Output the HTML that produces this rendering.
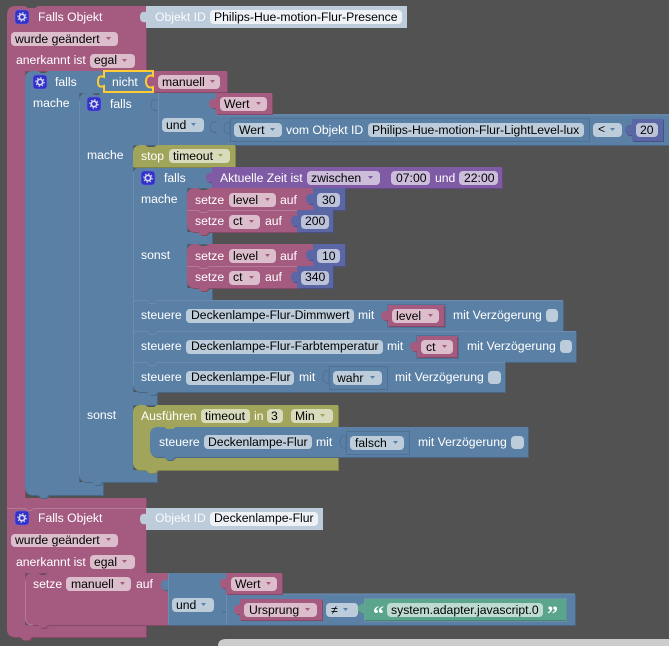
<!DOCTYPE html>
<html><head><meta charset="utf-8"><style>
html,body{margin:0;padding:0;background:#525252;width:669px;height:646px;overflow:hidden}
svg{display:block;position:absolute;left:0;top:0}
text{font-family:"Liberation Sans",sans-serif;font-size:12.2px;fill:#fff;white-space:pre}
.d{fill:#000}
.p{fill:#A55B80;filter:drop-shadow(1px 1px 0 #844966)}
.b{fill:#5B80A5;filter:drop-shadow(1px 1px 0 #496684)}
.o{fill:#A1A55B;filter:drop-shadow(1px 1px 0 #818449)}
.u{fill:#805BA5;filter:drop-shadow(1px 1px 0 #664984)}
.i{fill:#5B67A5;filter:drop-shadow(1px 1px 0 #495284)}
.g{fill:#5BA58C;filter:drop-shadow(1px 1px 0 #498470)}
.f{fill:#fff;fill-opacity:.6}
.c{fill:#BDCCDB}
.ab{fill:#5B80A5}
.l{fill:none;stroke:#6C8DAE;stroke-width:1}
.lp{fill:none;stroke:#B57A97;stroke-width:1}
.dk{fill:none;stroke:#4F7196;stroke-width:1}
.gi{fill:#3232C8;stroke:#6A6AD8;stroke-width:.6}
.gc{fill:none;stroke:#D8D8F4;stroke-width:1.700}
.gt{fill:none;stroke:#D8D8F4;stroke-width:1.100;stroke-dasharray:1.500 1.800}
</style></head><body>
<svg width="669" height="646" viewBox="0 0 669 646" xmlns="http://www.w3.org/2000/svg">
<!-- block 1 pink -->
<path class="p" d="M7 15Q7 6 16 6L25 6L28 8L35 8L38 6L146 6L146 71L25 71L25 498L146 498L146 508L7 508Z"/>
<!-- objekt id -->
<path class="c" d="M146 6H407V28H146V22C142 23 140 21 140 17C140 13 142 11 146 12Z"/>
<!-- outer if -->
<path class="b" d="M25 79Q25 71 33 71L38 71L41 73L45 73L48 71L103 71L103 93L79 93L79 482L103 482L103 495L49 495L46 498L41 498L38 495L33 495Q25 495 25 487Z"/>
<!-- level 2 if -->
<path class="b" d="M79 101Q79 93 87 93L92 93L95 95L98 95L101 93L157 93L157 145L133 145L133 392L157 392L157 405L133 405L133 470L157 470L157 482L103 482L100 485L95 485L92 482L87 482Q79 482 79 474Z"/>
<path class="l" d="M79.500 101V474"/>
<!-- und region -->
<path class="b" d="M157 93H216V145H157V110C153 111 151 109 151 105C151 101 153 99 157 100Z"/>
<path class="l" d="M158.500 93V145M216.500 114V145"/>
<path class="dk" d="M157 100C153 99 151 101 151 105C151 109 153 111 157 110"/>
<!-- compare -->
<path class="b" d="M216 114H669V145H216V132C212 133 210 131 210 127C210 123 212 121 216 122Z"/>
<path class="l" d="M216 115H669"/>
<path class="dk" d="M216 122C212 121 210 123 210 127C210 131 212 133 216 132"/>
<rect x="230.500" y="118.500" width="359" height="23" fill="#5B80A5" stroke="#4F7196"/>
<path class="ab" d="M230 123C226 122 224 124 224 128C224 132 226 134 230 133Z" stroke="#4F7196"/>
<!-- Wert 1 -->
<path class="p" d="M216 93H272V114H216V108C212 109 209 107 209 103.500C209 100 212 98 216 99Z"/>
<!-- nicht -->
<path class="ab" d="M104 72H153V92H104V86C99 88 97 85 97 82C97 78 99 75 104 77Z"/>
<path class="p" d="M153 71H227V92H153V87C149 88 147 85 147 81.500C147 78 149 75 153 76Z"/>
<path d="M104 71H153V76C148 74 146 78 146 81.500C146 85 148 89 153 87V92H104V86C99 88 98 85 98 82C98 78 99 75 104 77Z" fill="none" stroke="#FC3" stroke-width="2"/>
<!-- level3 if -->
<path class="b" d="M133 175Q133 167 141 167L212 167L212 188L187 188L187 232L212 232L212 244L187 244L187 288L212 288L212 300L133 300Z"/>
<path class="l" d="M133.500 172V299"/>
<!-- stop -->
<path class="o" d="M133 153Q133 145 141 145L145 145L148 147L154 147L157 145L235 145V167H133Z"/>
<!-- purple -->
<path class="u" d="M212 167H502V188H212V182C208 183 206 181 206 177.500C206 174 208 172 212 173Z"/>
<!-- setze level 1 -->
<path class="p" d="M187 196Q187 188 195 188L198 188L201 190L206 190L209 188L313 188V210H187Z"/>
<path class="i" d="M313 188H345V210H313V204C309 205 306 203 306 199C306 195 309 193 313 194Z"/>
<path class="p" d="M187 210H297V232H209L206 235H201L198 232H195Q187 232 187 224Z"/>
<path class="lp" d="M187 210.500H198L201 212.500H206L209 210.500H297"/>
<path class="i" d="M297 210H333V232H297V226C293 227 291 225 291 221C291 217 293 215 297 216Z"/>
<!-- setze level 2 -->
<path class="p" d="M187 252Q187 244 195 244L198 244L201 246L206 246L209 244L313 244V266H187Z"/>
<path class="i" d="M313 244H345V266H313V260C309 261 306 259 306 255C306 251 309 249 313 250Z"/>
<path class="p" d="M187 266H297V288H209L206 291H201L198 288H195Q187 288 187 280Z"/>
<path class="lp" d="M187 266.500H198L201 268.500H206L209 266.500H297"/>
<path class="i" d="M297 266H333V288H297V282C293 283 291 281 291 277C291 273 293 271 297 272Z"/>
<!-- steuere blocks -->
<path class="b" d="M133 300H563V331H133Z"/>
<path class="l" d="M133 300.500H147L150 303.500H155L158 300.500H563"/>
<path class="b" d="M133 331H576V362H133Z"/>
<path class="l" d="M133 331.500H147L150 334.500H155L158 331.500H576"/>
<path class="b" d="M133 362H505V392H158L155 395H150L147 392H141Q133 392 133 384Z"/>
<path class="l" d="M133 362.500H147L150 365.500H155L158 362.500H505"/>
<path class="l" d="M133.500 300V385"/>
<!-- level value -->
<rect x="387.500" y="304.500" width="58" height="23" fill="none" stroke="#4F7196"/>
<path class="p" d="M388 305H444V326H388V320C384 321 381 319 381 315.500C381 312 384 310 388 311Z"/>
<rect x="416.500" y="335.500" width="42" height="23" fill="none" stroke="#4F7196"/>
<path class="p" d="M417 336H457V357H417V351C413 352 410 350 410 346.500C410 343 413 341 417 342Z"/>
<rect x="329.500" y="366.500" width="58" height="23" fill="none" stroke="#4F7196"/>
<path class="ab" d="M329 371C325 370 323 372 323 377C323 382 325 384 329 383Z" stroke="#4F7196"/>
<!-- olive ausfuehren -->
<path class="o" d="M133 413Q133 405 141 405L145 405L148 407L154 407L157 405L338 405V427H176L173 429H167L164 427H158Q150 427 150 435V449Q150 457 158 457H338V470H158L155 473H149L146 470H141Q133 470 133 462Z"/>
<!-- inner steuere -->
<path class="b" d="M150 435Q150 427 158 427H164L167 429H173L176 427H528V457H175L172 460H167L164 457H158Q150 457 150 449Z"/>
<rect x="346.500" y="431.500" width="63" height="23" fill="none" stroke="#4F7196"/>
<path class="ab" d="M346 436C342 435 340 437 340 442C340 447 342 449 346 448Z" stroke="#4F7196"/>
<!-- block 2 pink -->
<path class="p" d="M7 508H146V573H25V625H146V637H32L29 640H23L20 637H15Q7 637 7 629Z"/>
<path class="lp" d="M7 508.500H25L28 510.500H31L34 508.500H146"/>
<path class="c" d="M146 508H323V530H146V524C142 525 140 523 140 519C140 515 142 513 146 514Z"/>
<!-- setze manuell -->
<path class="p" d="M25 581Q25 573 33 573L38 573L41 575L45 575L48 573L168 573V625H48L45 628H41L38 625H33Q25 625 25 617Z"/>
<path class="lp" d="M25.500 581V618Q25.500 625 33 625"/>
<path class="b" d="M168 573H226V625H168V590C164 591 161 589 161 585C161 581 164 579 168 580Z"/>
<path class="b" d="M226 594H575V625H226V611C222 612 220 610 220 606C220 602 222 600 226 601Z"/>
<path class="l" d="M226.500 594H575M168.500 574V625M226.500 594V625"/>
<path class="p" d="M226 573H282V594H226V588C222 589 220 587 220 583.500C220 580 222 578 226 579Z"/>
<path class="p" d="M240 599H322V620H240V614C236 615 234 613 234 609.500C234 606 236 604 240 605Z"/>
<path class="g" d="M364 599H566V620H364V614L358 611V606L364 603Z"/>
<rect x="364.500" y="598.500" width="202" height="23" fill="none" stroke="#7C99B7" stroke-opacity=".5"/>
<!-- compare right -->
<path class="i" d="M632 119H663V141H632V135C628 136 625 134 625 130C625 126 628 124 632 125Z"/>
<!-- bottom gray -->
<path d="M218 646Q218 639 226 639H669V646Z" fill="#CCCCCC"/>

<!-- gears -->
<g><rect class="gi" x="15" y="10" width="14" height="14" rx="3"/><circle class="gc" cx="22" cy="17" r="2.700"/><circle class="gt" cx="22" cy="17" r="4.200"/></g>
<g><rect class="gi" x="33" y="75" width="14" height="14" rx="3"/><circle class="gc" cx="40" cy="82" r="2.700"/><circle class="gt" cx="40" cy="82" r="4.200"/></g>
<g><rect class="gi" x="87" y="97" width="14" height="14" rx="3"/><circle class="gc" cx="94" cy="104" r="2.700"/><circle class="gt" cx="94" cy="104" r="4.200"/></g>
<g><rect class="gi" x="141" y="171" width="14" height="14" rx="3"/><circle class="gc" cx="148" cy="178" r="2.700"/><circle class="gt" cx="148" cy="178" r="4.200"/></g>
<g><rect class="gi" x="15" y="511" width="14" height="14" rx="3"/><circle class="gc" cx="22" cy="518" r="2.700"/><circle class="gt" cx="22" cy="518" r="4.200"/></g>

<!-- fields -->
<g class="f">
<rect x="210" y="10" width="192" height="14" rx="4" style="fill-opacity:.75"/>
<rect x="11" y="32" width="107" height="14" rx="4"/>
<rect x="90" y="54" width="45" height="14" rx="4"/>
<rect x="158" y="75" width="62" height="14" rx="4"/>
<rect x="220" y="97" width="47" height="14" rx="4"/>
<rect x="162" y="118" width="42" height="14" rx="4"/>
<rect x="234" y="123" width="48" height="14" rx="4"/>
<rect x="368" y="123" width="216" height="14" rx="4"/>
<rect x="593" y="123" width="29" height="14" rx="4"/>
<rect x="636" y="123" width="22" height="14" rx="4"/>
<rect x="169" y="149" width="61" height="14" rx="4"/>
<rect x="307" y="171" width="73" height="14" rx="4"/>
<rect x="391" y="171" width="39" height="14" rx="4"/>
<rect x="459" y="171" width="39" height="14" rx="4"/>
<rect x="229" y="193" width="47" height="14" rx="4"/>
<rect x="317" y="193" width="23" height="14" rx="4"/>
<rect x="229" y="215" width="31" height="14" rx="4"/>
<rect x="301" y="215" width="28" height="14" rx="4"/>
<rect x="229" y="249" width="47" height="14" rx="4"/>
<rect x="317" y="249" width="23" height="14" rx="4"/>
<rect x="229" y="271" width="31" height="14" rx="4"/>
<rect x="301" y="271" width="28" height="14" rx="4"/>
<rect x="186" y="309" width="168" height="14" rx="4"/>
<rect x="392" y="309" width="47" height="14" rx="4"/>
<rect x="546" y="309" width="12" height="13" rx="4"/>
<rect x="186" y="340" width="197" height="14" rx="4"/>
<rect x="421" y="340" width="32" height="14" rx="4"/>
<rect x="560" y="340" width="12" height="13" rx="4"/>
<rect x="186" y="371" width="108" height="14" rx="4"/>
<rect x="333" y="371" width="49" height="14" rx="4"/>
<rect x="488" y="371" width="13" height="13" rx="4"/>
<rect x="201" y="409" width="49" height="14" rx="4"/>
<rect x="267" y="409" width="16" height="14" rx="4"/>
<rect x="291" y="409" width="42" height="14" rx="4"/>
<rect x="204" y="435" width="108" height="14" rx="4"/>
<rect x="350" y="436" width="54" height="14" rx="4"/>
<rect x="511" y="436" width="13" height="13" rx="4"/>
<rect x="210" y="512" width="108" height="14" rx="4" style="fill-opacity:.75"/>
<rect x="11" y="534" width="107" height="13" rx="4"/>
<rect x="90" y="555" width="45" height="14" rx="4"/>
<rect x="66" y="577" width="65" height="14" rx="4"/>
<rect x="231" y="577" width="46" height="14" rx="4"/>
<rect x="172" y="598" width="42" height="14" rx="4"/>
<rect x="244" y="603" width="73" height="14" rx="4"/>
<rect x="326" y="603" width="32" height="14" rx="4"/>
<rect x="387" y="603" width="156" height="14" rx="4"/>
</g>

<!-- white labels -->
<text x="38" y="21">Falls Objekt</text>
<text x="155" y="21" fill-opacity=".9">Objekt ID</text>
<text x="16" y="64">anerkannt ist</text>
<text x="55" y="86">falls</text>
<text x="112" y="86">nicht</text>
<text x="33" y="107">mache</text>
<text x="110" y="108">falls</text>
<text x="286" y="134">vom Objekt ID</text>
<text x="87" y="159">mache</text>
<text x="141" y="160">stop</text>
<text x="164" y="182">falls</text>
<text x="220" y="182">Aktuelle Zeit ist</text>
<text x="435" y="182">und</text>
<text x="141" y="203">mache</text>
<text x="195" y="204">setze</text><text x="280" y="204">auf</text>
<text x="195" y="225">setze</text><text x="265" y="225">auf</text>
<text x="141" y="259">sonst</text>
<text x="195" y="260">setze</text><text x="280" y="260">auf</text>
<text x="195" y="281">setze</text><text x="265" y="281">auf</text>
<text x="141" y="319">steuere</text><text x="358" y="319">mit</text><text x="453" y="319">mit Verzögerung</text>
<text x="141" y="350">steuere</text><text x="387" y="350">mit</text><text x="467" y="350">mit Verzögerung</text>
<text x="141" y="381">steuere</text><text x="299" y="381">mit</text><text x="395" y="381">mit Verzögerung</text>
<text x="87" y="419">sonst</text>
<text x="141" y="420">Ausführen</text><text x="254" y="420">in</text>
<text x="159" y="446">steuere</text><text x="316" y="446">mit</text><text x="418" y="446">mit Verzögerung</text>
<text x="38" y="522">Falls Objekt</text>
<text x="155" y="522" fill-opacity=".9">Objekt ID</text>
<text x="16" y="566">anerkannt ist</text>
<text x="33" y="588">setze</text><text x="136" y="588">auf</text>
<text x="373" y="621" style="font-family:'Liberation Serif',serif;font-size:22px;font-weight:bold">“</text>
<text x="547" y="621" style="font-family:'Liberation Serif',serif;font-size:22px;font-weight:bold">”</text>

<!-- dark field text -->
<g>
<text class="d" x="214" y="21">Philips-Hue-motion-Flur-Presence</text>
<text class="d" x="15" y="43">wurde geändert</text>
<text class="d" x="94" y="64">egal</text>
<text class="d" x="162" y="86">manuell</text>
<text class="d" x="224" y="108">Wert</text>
<text class="d" x="166" y="129">und</text>
<text class="d" x="239" y="134">Wert</text>
<text class="d" x="372" y="134">Philips-Hue-motion-Flur-LightLevel-lux</text>
<text class="d" x="598" y="133">&lt;</text>
<text class="d" x="640" y="134">20</text>
<text class="d" x="173" y="160">timeout</text>
<text class="d" x="311" y="182">zwischen</text>
<text class="d" x="396" y="182">07:00</text>
<text class="d" x="464" y="182">22:00</text>
<text class="d" x="233" y="204">level</text>
<text class="d" x="322" y="204">30</text>
<text class="d" x="233" y="225">ct</text>
<text class="d" x="305" y="225">200</text>
<text class="d" x="233" y="260">level</text>
<text class="d" x="322" y="260">10</text>
<text class="d" x="233" y="281">ct</text>
<text class="d" x="305" y="281">340</text>
<text class="d" x="191" y="319">Deckenlampe-Flur-Dimmwert</text>
<text class="d" x="396" y="320">level</text>
<text class="d" x="191" y="350">Deckenlampe-Flur-Farbtemperatur</text>
<text class="d" x="426" y="351">ct</text>
<text class="d" x="191" y="381">Deckenlampe-Flur</text>
<text class="d" x="337" y="382">wahr</text>
<text class="d" x="205" y="420">timeout</text>
<text class="d" x="271" y="420">3</text>
<text class="d" x="295" y="420">Min</text>
<text class="d" x="208" y="446">Deckenlampe-Flur</text>
<text class="d" x="355" y="447">falsch</text>
<text class="d" x="214" y="522">Deckenlampe-Flur</text>
<text class="d" x="15" y="544">wurde geändert</text>
<text class="d" x="94" y="566">egal</text>
<text class="d" x="71" y="588">manuell</text>
<text class="d" x="235" y="588">Wert</text>
<text class="d" x="176" y="609">und</text>
<text class="d" x="249" y="614">Ursprung</text>
<text class="d" x="331" y="614">≠</text>
<text class="d" x="391" y="614">system.adapter.javascript.0</text>
</g>

<!-- dropdown arrows -->
<g fill="#A55B80">
<path d="M106 37h5l-2.500 3z"/><path d="M122 59h5l-2.500 3z"/><path d="M210 80h5l-2.500 3z"/><path d="M256 102h5l-2.500 3z"/>
<path d="M265 198h5l-2.500 3z"/><path d="M249 220h5l-2.500 3z"/><path d="M265 254h5l-2.500 3z"/><path d="M249 276h5l-2.500 3z"/>
<path d="M428 314h5l-2.500 3z"/><path d="M442 345h5l-2.500 3z"/>
<path d="M106 538h5l-2.500 3z"/><path d="M122 560h5l-2.500 3z"/><path d="M120 582h5l-2.500 3z"/><path d="M266 582h5l-2.500 3z"/><path d="M305 608h5l-2.500 3z"/>
</g>
<g fill="#5B80A5">
<path d="M191 123h5l-2.500 3z"/><path d="M270 128h5l-2.500 3z"/><path d="M610 128h5l-2.500 3z"/><path d="M370 376h5l-2.500 3z"/><path d="M393 441h5l-2.500 3z"/><path d="M201 603h5l-2.500 3z"/><path d="M343 608h5l-2.500 3z"/>
</g>
<g fill="#A1A55B"><path d="M218 154h5l-2.500 3z"/><path d="M320 414h5l-2.500 3z"/></g>
<path fill="#805BA5" d="M368 176h5l-2.500 3z"/>
</svg>
</body></html>
